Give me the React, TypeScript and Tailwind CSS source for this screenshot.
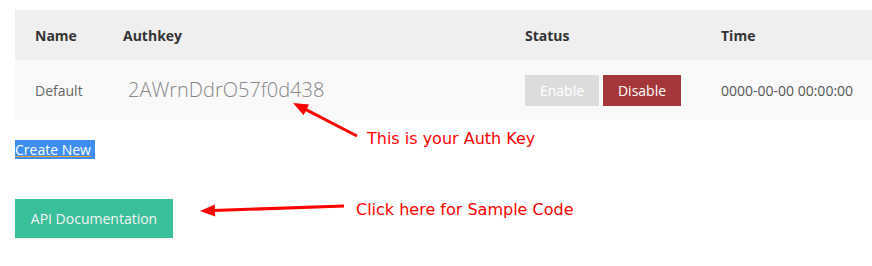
const cell = "flex items-center pl-[20px]";

const Arrow = ({ x1, y1, x2, y2 }: { x1: number; y1: number; x2: number; y2: number }) => {
    // head points at (x2, y2)
    const dx = x2 - x1;
    const dy = y2 - y1;
    const len = Math.sqrt(dx * dx + dy * dy);
    const ux = dx / len;
    const uy = dy / len;
    const hl = 15;
    const hw = 6;
    const bx = x2 - ux * hl;
    const by = y2 - uy * hl;
    const pts = `${x2},${y2} ${bx - uy * hw},${by + ux * hw} ${bx + uy * hw},${by - ux * hw}`;
    return (
        <g>
            <line x1={x1} y1={y1} x2={bx + ux * 2} y2={by + uy * 2} stroke="#ff0000" strokeWidth={3} />
            <polygon points={pts} fill="#ff0000" />
        </g>
    );
};

const App = () => {
    return (
        <div className="relative w-[872px] h-[266px] bg-white overflow-hidden font-['Open_Sans',sans-serif]">
            <div className="pt-[10px] pl-[15px]">
                <div className="grid grid-cols-[88px_402px_196px_1fr] h-[50px] bg-[#efefef] text-[14px] font-bold text-[#333]">
                    <div className={cell}>Name</div>
                    <div className={cell}>Authkey</div>
                    <div className={cell}>Status</div>
                    <div className={cell}>Time</div>
                </div>
                <div className="grid grid-cols-[88px_402px_196px_1fr] h-[60px] bg-[#f9f9f9] text-[14px] text-[#666]">
                    <div className={cell}>Default</div>
                    <div className="flex items-center pl-[25px] text-[20px] font-light text-[#888]">2AWrnDdrO57f0d438</div>
                    <div className={`${cell} gap-[4px]`}>
                        <button className="h-[31px] w-[74px] bg-[#dcdcdc] text-white text-[14px]">Enable</button>
                        <button className="h-[31px] w-[78px] bg-[#a5373a] text-white text-[14px]">Disable</button>
                    </div>
                    <div className={`${cell} text-[#555]`}>0000-00-00 00:00:00</div>
                </div>
                <div className="mt-[20px] h-[19px] flex">
                    <span className="bg-[#3d8ef0] text-white text-[14px] leading-[19px] underline decoration-[#f0a030] pr-[4px]">
                        Create New
                    </span>
                </div>
                <button className="mt-[40px] w-[158px] h-[39px] bg-[#39bf9a] text-[#f4f4f4] text-[14px]">
                    API Documentation
                </button>
            </div>

            <span className="absolute left-[367px] top-[127px] text-[16px] text-[#ff0000] font-['DejaVu_Sans',sans-serif]">
                This is your Auth Key
            </span>
            <span className="absolute left-[356px] top-[198px] text-[16px] text-[#ff0000] font-['DejaVu_Sans',sans-serif]">
                Click here for Sample Code
            </span>
            <svg className="absolute left-0 top-0 pointer-events-none" width={872} height={266}>
                <Arrow x1={357} y1={136} x2={293} y2={103} />
                <Arrow x1={344} y1={206} x2={200} y2={211} />
            </svg>
        </div>
    );
};

export default App;
